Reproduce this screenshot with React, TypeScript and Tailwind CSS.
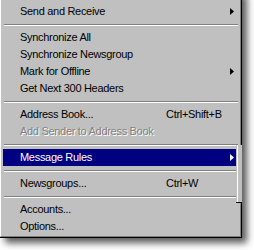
// Outlook Express style "Tools" menu (Win98 look)
type Item =
  | { kind: "sep" }
  | {
      kind: "item";
      label: string;
      shortcut?: string;
      submenu?: boolean;
      disabled?: boolean;
      active?: boolean;
    };

const items: Item[] = [
  { kind: "item", label: "Send and Receive", submenu: true },
  { kind: "sep" },
  { kind: "item", label: "Synchronize All" },
  { kind: "item", label: "Synchronize Newsgroup" },
  { kind: "item", label: "Mark for Offline", submenu: true },
  { kind: "item", label: "Get Next 300 Headers" },
  { kind: "sep" },
  { kind: "item", label: "Address Book...", shortcut: "Ctrl+Shift+B" },
  { kind: "item", label: "Add Sender to Address Book", disabled: true },
  { kind: "sep" },
  { kind: "item", label: "Message Rules", submenu: true, active: true },
  { kind: "sep" },
  { kind: "item", label: "Newsgroups...", shortcut: "Ctrl+W" },
  { kind: "sep" },
  { kind: "item", label: "Accounts..." },
  { kind: "item", label: "Options..." },
];

const Arrow = ({ color }: { color: string }) => (
  <svg width="4" height="7" viewBox="0 0 4 7" className="block">
    <polygon points="0,0 4,3.5 0,7" fill={color} />
  </svg>
);

const Separator = () => (
  <div className="h-[9px] pt-[4px] px-[1px]">
    <div className="h-px bg-[#808080]" />
    <div className="h-px bg-white" />
  </div>
);

const MenuRow = ({ item }: { item: Extract<Item, { kind: "item" }> }) => {
  const text = item.active
    ? "text-white"
    : item.disabled
    ? "text-[#808080] [text-shadow:1px_1px_0_#ffffff]"
    : "text-black";
  return (
    <div
      className={`h-[17px] flex items-center pl-[17px] pr-[5px] ${
        item.active ? "bg-[#000080]" : ""
      } ${text}`}
    >
      <div className="grid grid-cols-[146px_1fr] flex-1 whitespace-nowrap">
        <span>{item.label}</span>
        <span>{item.shortcut ?? ""}</span>
      </div>
      {item.submenu && <Arrow color={item.active ? "#ffffff" : "#000000"} />}
    </div>
  );
};

export default function App() {
  return (
    <div className="w-[254px] h-[250px] bg-white overflow-hidden font-['Liberation_Sans',Arial,sans-serif] text-[11px] tracking-[-0.3px]">
      <div className="relative -mt-[10px] w-[242px] border-r border-b border-black shadow-[5px_5px_7px_rgba(0,0,0,0.65)]">
        <div className="border-l border-white border-r border-b border-r-[#808080] border-b-[#808080] bg-[#c0c0c0] pt-[13px] pb-px pl-[2px] pr-px">
          {items.map((it, i) =>
            it.kind === "sep" ? <Separator key={i} /> : <MenuRow key={i} item={it} />
          )}
        </div>

        {/* edge of the neighbouring submenu frame overlapping the right border */}
        <div className="absolute left-[236px] top-[155px] w-[6px] h-[58px] bg-[#c0c0c0] border-b border-black">
          <div className="ml-px w-px h-full bg-white" />
        </div>
      </div>
    </div>
  );
}
